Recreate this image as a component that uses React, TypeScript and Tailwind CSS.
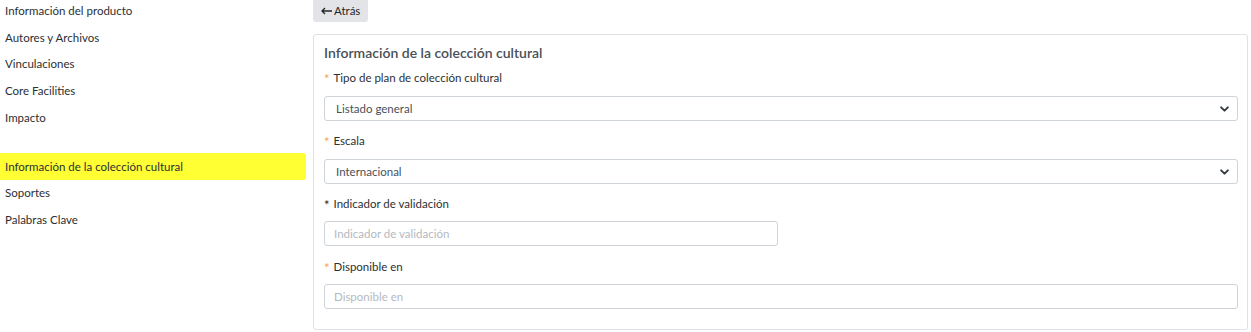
const navTop = ['Información del producto', 'Autores y Archivos', 'Vinculaciones', 'Core Facilities', 'Impacto'];
const navBottom = ['Soportes', 'Palabras Clave'];

const Chevron = () => (
  <svg className="absolute right-[8px] top-1/2 -translate-y-1/2 h-[6px] w-[9px]" viewBox="0 0 16 10" fill="none">
    <path d="M2 2l6 6 6-6" stroke="#343a40" strokeWidth="3.4" strokeLinecap="round" strokeLinejoin="round" />
  </svg>
);

const Req = ({ color = 'text-[#f0a35e]' }: { color?: string }) => (
  <span className={`${color} mr-[4px] text-[13px] leading-none relative top-[1px]`}>*</span>
);

const Label = ({ children, mt }: { children: React.ReactNode; mt: string }) => (
  <div className={`${mt} h-[16px] flex items-center`}>{children}</div>
);

const Select = ({ value }: { value: string }) => (
  <div className="relative h-[25px] w-full rounded-[3px] border border-[#ced4da] bg-white pl-[11px] flex items-center text-[11.5px] text-[#495057]">
    {value}
    <Chevron />
  </div>
);

export default function App() {
  return (
    <div className="flex h-[332px] w-[1251px] overflow-hidden bg-white text-[11.5px] text-[#2b2f33] font-['Lato','Noto_Sans',sans-serif]">
      <aside className="w-[306px] shrink-0">
        <ul className="-mt-[3px]">
          {navTop.map((n) => (
            <li key={n} className="h-[26.75px] flex items-center pl-[5px]">
              {n}
            </li>
          ))}
        </ul>
        <div className="h-[22px]" />
        <div className="h-[27px] flex items-center pl-[5px] bg-[#ffff33] rounded-r-[3px]">
          Información de la colección cultural
        </div>
        <ul>
          {navBottom.map((n) => (
            <li key={n} className="h-[26.5px] flex items-center pl-[5px]">
              {n}
            </li>
          ))}
        </ul>
      </aside>
      <main className="ml-[7px] flex-1 pr-[3px]">
        <button className="h-[22px] px-[8px] rounded-b-[3px] bg-[#e2e4e8] text-[11.5px] text-[#212529] flex items-center gap-[2px]">
          <svg className="h-[8px] w-[11px]" viewBox="0 0 11 8" fill="none">
            <path d="M4 1L1 4l3 3M1 4h10" stroke="#212529" strokeWidth="1.4" strokeLinejoin="round" />
          </svg>
          Atrás
        </button>
        <section className="mt-[12px] h-[296px] rounded-[3px] border border-[#dee2e6] pl-[10px] pr-[9px] pt-[8px]">
          <h2 className="text-[14px] text-[#495057] font-semibold leading-[20px]">Información de la colección cultural</h2>
          <Label mt="mt-[7px]"><Req />Tipo de plan de colección cultural</Label>
          <div className="mt-[10px]"><Select value="Listado general" /></div>
          <Label mt="mt-[12px]"><Req />Escala</Label>
          <div className="mt-[10px]"><Select value="Internacional" /></div>
          <Label mt="mt-[12px]"><Req color="text-[#212529]" />Indicador de validación</Label>
          <input
            placeholder="Indicador de validación"
            className="mt-[9px] block h-[25px] w-[454px] rounded-[3px] border border-[#ced4da] pl-[9px] text-[11.5px] placeholder:text-[#b4b9bf] outline-none"
          />
          <Label mt="mt-[13px]"><Req />Disponible en</Label>
          <input
            placeholder="Disponible en"
            className="mt-[9px] block h-[25px] w-full rounded-[3px] border border-[#ced4da] pl-[9px] text-[11.5px] placeholder:text-[#b4b9bf] outline-none"
          />
        </section>
      </main>
    </div>
  );
}
